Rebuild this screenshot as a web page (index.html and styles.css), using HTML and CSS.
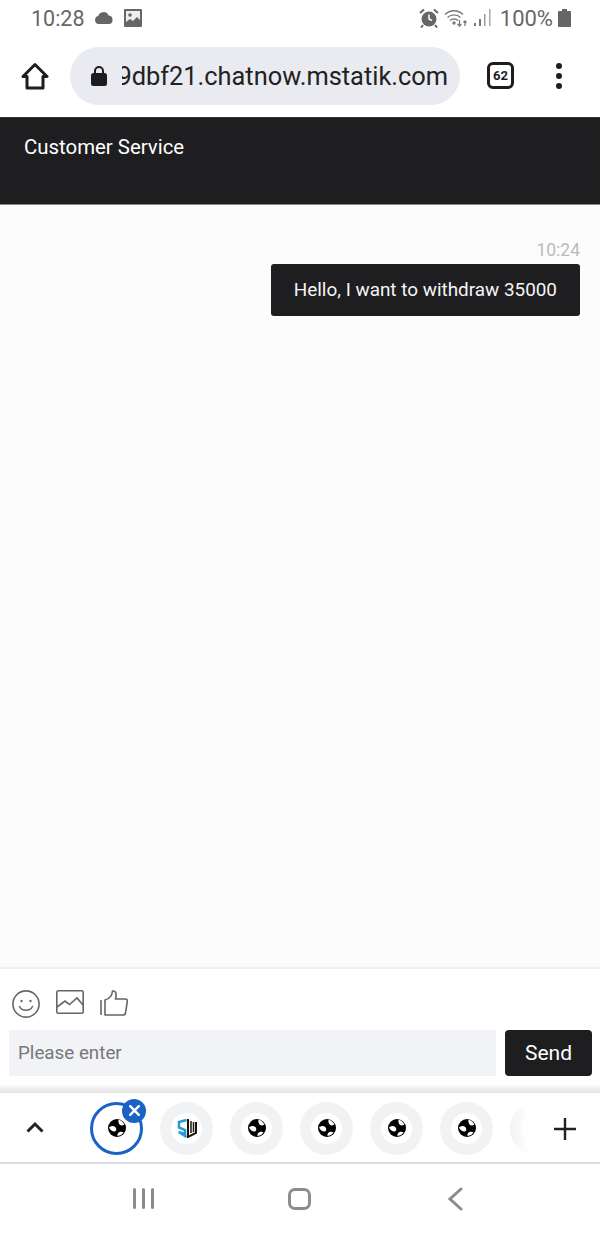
FILE: index.html
```html
<!DOCTYPE html>
<html lang="en">
<head>
  <meta charset="UTF-8" />
  <meta name="viewport" content="width=device-width, initial-scale=1" />
  <title>Customer Service</title>
  <link rel="stylesheet" href="styles.css">
</head>
<body>
  <svg class="defs" width="0" height="0">
    <symbol id="globe" viewBox="0 0 18 18">
      <circle cx="9" cy="9" r="9" fill="#000"/>
      <path d="M1 8.500c2-1.800 4.500-2 6-.8 1.600 1.300 1.800 3.800.3 4.600C5.300 13 2.500 11.500 1 8.500zM10.500 .8c2.600.5 4.800 2.300 5.800 4.700-1.600 1.300-3.500 1.200-4.500.2-1-1.100-1.800-3-1.300-4.900zM9.500 17c-.4-2 .8-3.800 2.800-4.200 1.300-.2 2.500.1 3.200.8-1.300 2-3.500 3.300-6 3.400z" fill="#fff"/>
    </symbol>
  </svg>

  <div class="status-bar">
    <div class="status-left">
      <span class="clock">10:28</span>
      <svg class="cloud" width="20" height="14" viewBox="0 0 20 14"><path d="M5 13a4 4 0 0 1-.8-7.900A5.500 5.500 0 0 1 14.600 4.600 4.300 4.300 0 0 1 15.500 13z" fill="#666"/></svg>
      <svg class="picture" width="18" height="18" viewBox="0 0 18 18"><path d="M1 0h16a1 1 0 0 1 1 1v16a1 1 0 0 1-1 1H1a1 1 0 0 1-1-1V1a1 1 0 0 1 1-1z" fill="#666"/><path d="M2 2h14v14H2z" fill="#eee"/><circle cx="6" cy="6" r="1.800" fill="#666"/><path d="M2 16v-3l4-3 3 2 4-4 3 3v5z" fill="#666"/></svg>
    </div>
    <div class="status-right">
      <svg width="20" height="20" viewBox="0 0 20 20"><circle cx="10" cy="11" r="7.500" fill="#666"/><path d="M10 6.500V11l3 1.500" fill="none" stroke="#fff" stroke-width="1.500"/><path d="M1 5l4-3.500M19 5l-4-3.500M4 17l-2 2.500M16 17l2 2.500" stroke="#666" stroke-width="2"/></svg>
      <svg width="24" height="20" viewBox="0 0 24 20" fill="none" stroke="#777" stroke-width="1.300"><path d="M1 6.500c5-5 13-5 18 0M3.500 9.500c3.500-3.500 9.500-3.500 13 0M6 12.500c2-2 6-2 8 0"/><circle cx="10" cy="15" r="1" fill="#777"/><path d="M15.500 12v6M13.500 16l2 2 2-2M21 18v-5M19.500 14.500l1.500-1.500 1.500 1.500"/></svg>
      <svg width="18" height="20" viewBox="0 0 18 20" fill="#777"><rect x="1" y="15" width="2" height="3"/><rect x="6" y="11" width="2" height="7"/><rect x="11" y="6" width="1.500" height="12" fill="#999"/><rect x="16" y="1" width="1.500" height="17" fill="#aaa"/></svg>
      <span class="battery-text">100%</span>
      <svg width="13" height="18" viewBox="0 0 13 18"><path d="M4 0h5v2h3a1 1 0 0 1 1 1v14a1 1 0 0 1-1 1H1a1 1 0 0 1-1-1V3a1 1 0 0 1 1-1h3z" fill="#666"/></svg>
    </div>
  </div>

  <div class="browser-bar">
    <svg class="home" width="28" height="28" viewBox="0 0 28 28" fill="none" stroke="#1d1d1f" stroke-width="3" stroke-linejoin="round"><path d="M2 14.500 14 2.500l12 12h-4V26H6V14.500z"/></svg>
    <div class="url-pill">
      <svg width="16" height="20" viewBox="0 0 16 20"><path d="M4 8V5a4 4 0 0 1 8 0v3" fill="none" stroke="#1d1d1f" stroke-width="2"/><rect y="7" width="16" height="13" rx="2.500" fill="#1d1d1f"/></svg>
      <div class="url-clip"><span>89dbf21.chatnow.mstatik.com</span></div>
    </div>
    <div class="tab-count">62</div>
    <div class="more-dots"><i></i><i></i><i></i></div>
  </div>

  <header class="chat-header">Customer Service</header>

  <main class="chat-body">
    <div class="msg-time">10:24</div>
    <div class="msg-bubble">Hello, I want to withdraw 35000</div>
  </main>

  <section class="compose">
    <div class="compose-icons">
      <svg width="28" height="28" viewBox="0 0 28 28" fill="none" stroke="#666" stroke-width="1.600"><circle cx="14" cy="14" r="13.100"/><circle cx="9.500" cy="11" r="1.200" fill="#666" stroke="none"/><circle cx="18.500" cy="11" r="1.200" fill="#666" stroke="none"/><path d="M7.500 16.500c2.500 5 10.500 5 13 0" stroke-linecap="round"/></svg>
      <svg width="28" height="24" viewBox="0 0 28 24" fill="none" stroke="#666" stroke-width="1.600"><rect x=".8" y=".8" width="26.400" height="22.400" rx="1.500"/><path d="M1 17l8-6 4.500 3.500L21 8l6 7"/></svg>
      <svg width="28" height="26" viewBox="0 0 28 26" fill="none" stroke="#666" stroke-width="1.600" stroke-linejoin="round"><path d="M1 10v15"/><path d="M5 25V10c4-1 7-4 7.500-9 3-.5 4.500 2 3 8h10c1.500 0 2 1 1.800 2.500L25.500 23c-.3 1.500-1 2-2.500 2z"/></svg>
    </div>
    <div class="compose-row">
      <input class="compose-input" type="text" placeholder="Please enter">
      <button class="send-btn">Send</button>
    </div>
  </section>

  <div class="tab-shadow"></div>
  <nav class="tab-strip">
    <svg class="tab-up" width="18" height="12" viewBox="0 0 18 12" fill="none" stroke="#222" stroke-width="3"><path d="M1.500 10.500 9 3l7.500 7.500"/></svg>
    <div class="tab-list">
      <div class="tab-item is-active">
        <svg width="18" height="18"><use href="#globe"/></svg>
        <span class="tab-close">
          <svg width="11" height="11" viewBox="0 0 11 11" stroke="#fff" stroke-width="2.400" stroke-linecap="round"><path d="M1.200 1.200l8.600 8.600M9.800 1.200l-8.600 8.600"/></svg>
        </span>
      </div>
      <div class="tab-item">
        <!-- site logo: blue band on the left, dark bars on the right -->
        <svg width="20" height="20" viewBox="0 0 20 20" fill="none">
          <path d="M9.500 2 2 4v5.500l6 2.500v4L1.500 14M2 14l7.500 5" stroke="#2a9ad6" stroke-width="2.600"/>
          <path d="M11 1v18l8-4V4" stroke="#1c1410" stroke-width="2"/>
          <path d="M14 3v12M16.500 4v10" stroke="#1c1410" stroke-width="1.500"/>
        </svg>
      </div>
      <div class="tab-item"><svg width="18" height="18"><use href="#globe"/></svg></div>
      <div class="tab-item"><svg width="18" height="18"><use href="#globe"/></svg></div>
      <div class="tab-item"><svg width="18" height="18"><use href="#globe"/></svg></div>
      <div class="tab-item"><svg width="18" height="18"><use href="#globe"/></svg></div>
      <div class="tab-item"><svg width="18" height="18"><use href="#globe"/></svg></div>
    </div>
    <div class="tab-fade"></div>
    <svg class="tab-add" width="22" height="22" viewBox="0 0 22 22" stroke="#222" stroke-width="2.400"><path d="M11 0v22M0 11h22"/></svg>
  </nav>

  <div class="nav-bar">
    <div class="nav-recent"><i></i><i></i><i></i></div>
    <div class="nav-home"></div>
    <svg width="16" height="24" viewBox="0 0 16 24" fill="none" stroke="#8c8c8c" stroke-width="3" stroke-linecap="round"><path d="M14 2 3 12l11 10"/></svg>
  </div>
</body>
</html>
```

FILE: styles.css
```css
* {
  box-sizing: border-box;
}
body {
  margin: 0;
  width: 600px;
  height: 1233px;
  display: flex;
  flex-direction: column;
  font-family: Roboto, "Liberation Sans", sans-serif;
  background: #fff;
  overflow: hidden;
}
.defs {
  position: absolute;
}

/* phone status bar */
.status-bar {
  height: 34px;
  flex: none;
  display: flex;
  justify-content: space-between;
  align-items: center;
  padding: 2px 29px 0 31px;
  color: #666;
  font-size: 21.5px;
}
.status-left, .status-right {
  display: flex;
  align-items: center;
}
.cloud {
  margin-left: 9px;
}
.picture {
  margin-left: 10px;
}
.status-right {
  gap: 5px;
}
.battery-text {
  margin-left: 4px;
  font-size: 22px;
}

/* browser toolbar */
.browser-bar {
  height: 84px;
  flex: none;
  display: flex;
  align-items: center;
  padding: 0 0 0 21px;
  border-bottom: 1px solid #333;
}
.home {
  flex: none;
  margin-right: 21px;
  margin-top: 1px;
}
.url-pill {
  width: 390px;
  height: 58px;
  flex: none;
  display: flex;
  align-items: center;
  padding-left: 21px;
  background: #e9ebf0;
  border-radius: 29px;
}
.url-clip {
  width: 326px;
  margin-left: 15px;
  display: flex;
  justify-content: flex-end;
  overflow: hidden;
  color: #222;
  font-size: 25.4px;
  white-space: nowrap;
}
.tab-count {
  width: 27px;
  height: 27px;
  flex: none;
  margin-left: 27px;
  border: 3px solid #1d1d1f;
  border-radius: 6px;
  color: #1d1d1f;
  font-size: 13px;
  font-weight: 700;
  line-height: 21px;
  text-align: center;
}
.more-dots {
  margin-left: 42px;
  display: flex;
  flex-direction: column;
  gap: 4px;
}
.more-dots i {
  width: 6px;
  height: 6px;
  border-radius: 50%;
  background: #1d1d1f;
}

/* chat */
.chat-header {
  height: 87px;
  flex: none;
  padding: 17px 24px;
  background: #1e1e20;
  border-bottom: 1px solid #888;
  color: #fff;
  font-size: 20.4px;
  line-height: 24px;
}
.chat-body {
  flex: 1;
  display: flex;
  flex-direction: column;
  align-items: flex-end;
  padding: 35px 20px 0 0;
  background: #fcfcfc;
}
.msg-time {
  color: #bbb;
  font-size: 17.5px;
  line-height: 20px;
  margin-bottom: 4px;
}
.msg-bubble {
  height: 52px;
  padding: 0 23px;
  background: #1e1e20;
  border-radius: 3px;
  color: #f5f5f5;
  font-size: 18.9px;
  line-height: 52px;
}
.compose {
  height: 118px;
  flex: none;
  border-top: 2px solid #f0f0f0;
  padding: 21px 8px 0 9px;
}
.compose-icons {
  height: 40px;
  display: flex;
  align-items: flex-start;
  gap: 16px;
  padding-left: 3px;
}
.compose-row {
  display: flex;
  gap: 9px;
}
.compose-input {
  flex: 1;
  height: 46px;
  border: none;
  padding: 0 9px;
  background: #f2f3f7;
  font-family: inherit;
  font-size: 18.8px;
}
.compose-input::placeholder {
  color: #777;
}
.send-btn {
  width: 87px;
  height: 46px;
  border: none;
  border-radius: 4px;
  background: #1e1e20;
  color: #fff;
  font-family: inherit;
  font-size: 21px;
}

/* samsung internet tab strip */
.tab-shadow {
  height: 8px;
  flex: none;
  background: linear-gradient(#fafafa, #e2e2e2);
}
.tab-strip {
  position: relative;
  height: 71px;
  flex: none;
  display: flex;
  align-items: center;
  border-bottom: 2px solid #ddd;
  padding-top: 1px;
}
.tab-up {
  position: absolute;
  left: 26px;
  top: 28px;
}
.tab-list {
  display: flex;
  gap: 17px;
  margin-left: 90px;
}
.tab-item {
  position: relative;
  width: 53px;
  height: 53px;
  flex: none;
  display: flex;
  align-items: center;
  justify-content: center;
  background: radial-gradient(circle, #fff 0 15px, #f1f2f4 16px);
  border-radius: 50%;
}
.tab-item.is-active {
  background: #fff;
  border: 3px solid #1a62c4;
}
.tab-close {
  position: absolute;
  top: -6px;
  right: -6px;
  width: 24px;
  height: 24px;
  display: flex;
  align-items: center;
  justify-content: center;
  background: #1a62c4;
  border-radius: 50%;
}
.tab-fade {
  position: absolute;
  top: 0;
  bottom: 0;
  right: 0;
  width: 90px;
  background: linear-gradient(90deg, rgba(255, 255, 255, 0) 0, #fff 19px);
}
.tab-add {
  position: absolute;
  left: 554px;
  top: 25px;
}

/* phone nav */
.nav-bar {
  height: 69px;
  flex: none;
  display: flex;
  align-items: center;
  padding: 0 0 0 133px;
}
.nav-recent {
  display: flex;
  gap: 6px;
}
.nav-recent i {
  width: 3px;
  height: 21px;
  background: #8c8c8c;
  border-radius: 2px;
}
.nav-home {
  width: 23px;
  height: 22px;
  margin: 0 136px 0 134px;
  border: 3px solid #8c8c8c;
  border-radius: 7px;
}
```
